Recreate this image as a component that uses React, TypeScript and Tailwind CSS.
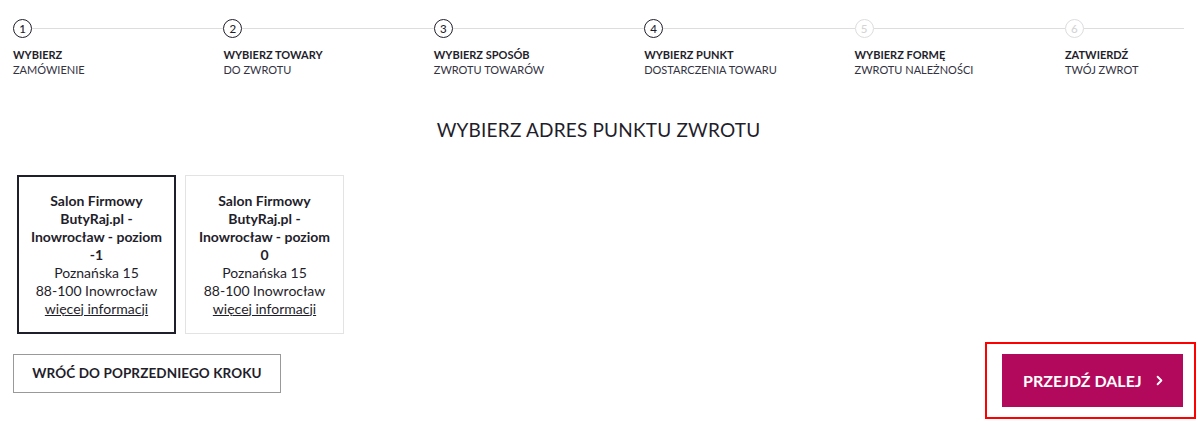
import React from 'react';
import { ChevronRight } from 'lucide-react';

const STEPS = [
  { n: 1, title: 'WYBIERZ', sub: 'ZAMÓWIENIE', done: true },
  { n: 2, title: 'WYBIERZ TOWARY', sub: 'DO ZWROTU', done: true },
  { n: 3, title: 'WYBIERZ SPOSÓB', sub: 'ZWROTU TOWARÓW', done: true },
  { n: 4, title: 'WYBIERZ PUNKT', sub: 'DOSTARCZENIA TOWARU', done: true },
  { n: 5, title: 'WYBIERZ FORMĘ', sub: 'ZWROTU NALEŻNOŚCI', done: false },
  { n: 6, title: 'ZATWIERDŹ', sub: 'TWÓJ ZWROT', done: false },
];

const POINTS = [
  { name: 'Salon Firmowy ButyRaj.pl - Inowrocław - poziom -1', selected: true },
  { name: 'Salon Firmowy ButyRaj.pl - Inowrocław - poziom 0', selected: false },
];

const App: React.FC = () => {
  return (
    <div className="w-[1197px] h-[422px] bg-white text-[#1f1e2b] font-['Lato','Open_Sans',sans-serif] px-[13px] pt-[19px]">
      {/* Stepper */}
      <div className="grid grid-cols-[repeat(5,210.4px)_1fr]">
        {STEPS.map((s) => (
          <div key={s.n}>
            <div className="flex items-center">
              <div
                className={`w-[19px] h-[19px] rounded-full border flex items-center justify-center text-[11.5px] font-medium leading-none ${
                  s.done ? 'border-[#1f1e2b] text-[#1f1e2b]' : 'border-[#dddddd] text-[#d4d4d4]'
                }`}
              >
                {s.n}
              </div>
              <div className="flex-1 h-px bg-[#dddddd]" />
            </div>
            <div className="mt-[9px] text-[11px] leading-[15px]">
              <div className="font-bold">{s.title}</div>
              <div className="text-[#33323f]">{s.sub}</div>
            </div>
          </div>
        ))}
      </div>

      <h2 className="mt-[41px] text-center text-[19px] leading-[24px] tracking-[0.2px]">WYBIERZ ADRES PUNKTU ZWROTU</h2>

      {/* Points */}
      <div className="mt-[33px] ml-1 flex gap-[9px]">
        {POINTS.map((p, i) => (
          <div
            key={i}
            className={`w-[159px] h-[159px] flex flex-col items-center justify-center text-center px-[9px] text-[14px] leading-[18px] ${
              p.selected ? 'border-2 border-[#1f1e2b]' : 'border border-[#e3e3e3]'
            }`}
          >
            <div className="font-bold">{p.name}</div>
            <div>Poznańska 15</div>
            <div>88-100 Inowrocław</div>
            <a href="#" className="underline">więcej informacji</a>
          </div>
        ))}
      </div>

      {/* Actions */}
      <div className="mt-2 flex justify-between items-start">
        <button className="mt-3 w-[268px] h-[39px] border border-[#999999] text-[13.5px] font-bold tracking-[0.1px]">
          WRÓĆ DO POPRZEDNIEGO KROKU
        </button>
        <div className="-mr-[12px] border-2 border-[#ff0000] pt-[10px] pb-[10px] pl-[15px] pr-[11px]">
          <button className="w-[181px] h-[53px] bg-[#b3095c] text-white text-[16px] font-bold flex items-center pl-[21px]">
            PRZEJDŹ DALEJ
            <ChevronRight className="ml-[10px] w-[15px] h-[15px]" strokeWidth={3} />
          </button>
        </div>
      </div>
    </div>
  );
};

export default App;
